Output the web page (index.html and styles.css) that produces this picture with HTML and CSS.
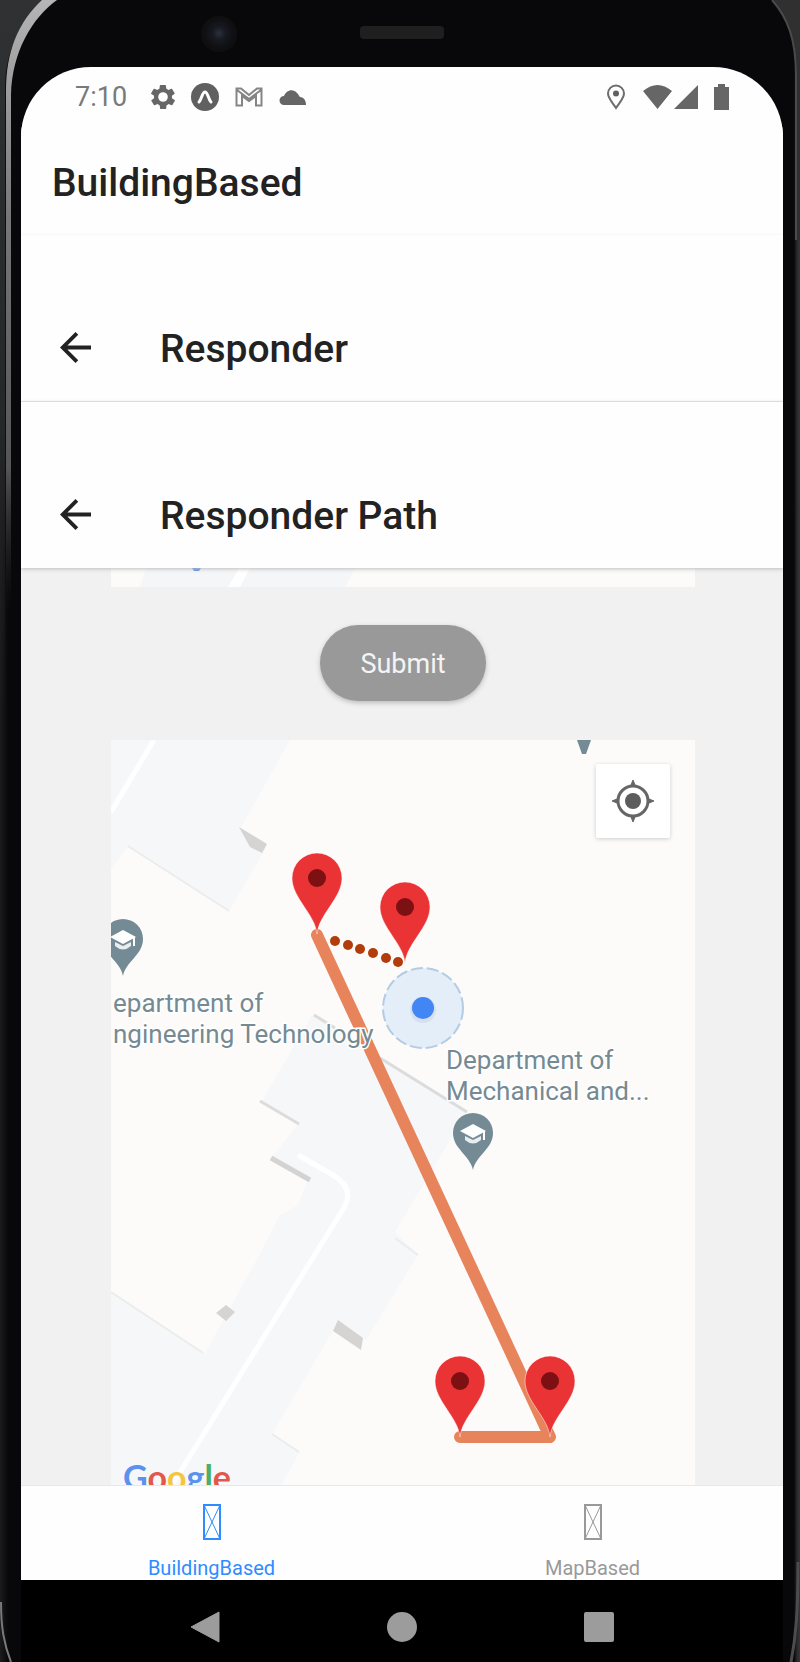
FILE: index.html
```html
<!DOCTYPE html>
<html lang="en">
<head>
<meta charset="utf-8">
<meta name="viewport" content="width=device-width, initial-scale=1">
<title>BuildingBased</title>
<link rel="stylesheet" href="styles.css">
</head>
<body>
<div class="phone">
  <svg class="edge edge-tl" viewBox="0 0 64 720" width="64" height="720" aria-hidden="true">
    <defs>
      <linearGradient id="rim" x1="0" y1="0" x2="0" y2="1"><stop offset="0" stop-color="#b5b5b5"/><stop offset=".3" stop-color="#777"/><stop offset=".65" stop-color="#555"/><stop offset=".85" stop-color="#222" stop-opacity="0"/></linearGradient>
      <linearGradient id="side" x1="0" y1="0" x2="0" y2="1"><stop offset="0" stop-color="#2f3132"/><stop offset=".6" stop-color="#262728"/><stop offset="1" stop-color="#1a1a1c" stop-opacity="0"/></linearGradient>
    </defs>
    <path d="M0 0H50C20 20 5 50 5 90V720H0Z" fill="url(#side)"/>
    <path d="M42 0H57C32 18 12 52 11 95V720H6V90C6 52 18 22 42 0Z" fill="url(#rim)"/>
  </svg>
  <svg class="edge edge-tr" viewBox="0 0 32 240" width="32" height="240" aria-hidden="true">
    <path d="M4 0H32V240H29V70C28 40 20 18 4 0Z" fill="#303030"/>
    <path d="M4 0C20 18 28 40 28 75V240" fill="none" stroke="#4a4a4c" stroke-width="2"/>
  </svg>
  <svg class="edge edge-bl" viewBox="0 0 16 60" width="16" height="60" aria-hidden="true"><path d="M1 0C1 26 4 42 11 60" fill="none" stroke="#77787a" stroke-width="2"/></svg>
  <svg class="edge edge-br" viewBox="0 0 16 100" width="16" height="100" aria-hidden="true"><path d="M14 0C14 50 12 74 7 100" fill="none" stroke="#4c4c4e" stroke-width="3"/></svg>

  <div class="bezel">
    <span class="camera"></span>
    <span class="speaker"></span>
  </div>

  <div class="screen">
    <div class="status">
      <time class="clock">7:10</time>
      <svg width="24" height="26" viewBox="2 2 20 20"><path fill="#666" fill-rule="evenodd" d="M19.4 13a7 7 0 0 0 0-2l2.1-1.6a.5.5 0 0 0 .1-.7l-2-3.4a.5.5 0 0 0-.6-.2l-2.5 1a7 7 0 0 0-1.7-1l-.4-2.6a.5.5 0 0 0-.5-.5h-4a.5.5 0 0 0-.5.5L9 5.100a7 7 0 0 0-1.700 1l-2.500-1a.5.5 0 0 0-.6.2l-2 3.400a.5.5 0 0 0 .1.700L4.600 11a7 7 0 0 0 0 2l-2.100 1.600a.5.5 0 0 0-.1.700l2 3.400c.1.2.4.3.6.2l2.500-1a7 7 0 0 0 1.700 1l.4 2.600c0 .3.2.5.5.5h4c.3 0 .5-.2.5-.5l.4-2.600a7 7 0 0 0 1.700-1l2.500 1c.2.1.5 0 .6-.2l2-3.400a.5.5 0 0 0-.1-.7zM12 16a4 4 0 1 1 0-8 4 4 0 0 1 0 8Z"/></svg>
      <svg width="28" height="28" viewBox="0 0 28 28"><circle cx="14" cy="14" r="14" fill="#606060"/><path d="M8 19C11 16 11 9 14 9S17 16 20 19" fill="none" stroke="#fff" stroke-width="3" stroke-linecap="round"/></svg>
      <svg width="28" height="20" viewBox="0 0 28 20"><path d="M1.500 1.500H6L14 8 22 1.500H26.500V18.500H21V9L14 14 7 9V18.500H1.500ZM2 3 14 12 26 3" fill="none" stroke="#858585" stroke-width="2"/></svg>
      <svg width="28" height="17" viewBox="0 0 28 17"><path d="M5 16A4.500 4.500 0 0 1 5 7C7 1 14-1 18 4 20 6 20 7 21 8 25 8 27 12 27 16Z" fill="#666"/></svg>
      <span class="spacer"></span>
      <svg width="20" height="26" viewBox="0 0 20 26"><path d="M10 1.500A8 8 0 0 0 2 9.500C2 14 6 18 10 24 14 18 18 14 18 9.500A8 8 0 0 0 10 1.500Z" fill="none" stroke="#6d6d6d" stroke-width="2"/><circle cx="10" cy="9.500" r="3" fill="#606060"/></svg>
      <svg width="56" height="24" viewBox="0 0 56 24"><path d="M1 6Q15.500-6 30 6L15.500 24ZM56 0V24H32Z" fill="#666"/></svg>
      <svg width="15" height="26" viewBox="0 0 15 26"><path d="M0 3H4V0H11V3H15V26H0Z" fill="#666"/></svg>
    </div>

    <header class="bar bar-root"><h1 class="title">BuildingBased</h1></header>
    <header class="bar bar-nested">
      <button class="back" aria-label="Back"><svg width="31" height="31" viewBox="4 4 16 16"><path fill="#222" d="M20 11H7.830l5.590-5.590L12 4l-8 8 8 8 1.410-1.410L7.830 13H20z"/></svg></button>
      <h2 class="title">Responder</h2>
    </header>
    <header class="bar bar-nested bar-last">
      <button class="back" aria-label="Back"><svg width="31" height="31" viewBox="4 4 16 16"><path fill="#222" d="M20 11H7.830l5.590-5.590L12 4l-8 8 8 8 1.410-1.410L7.830 13H20z"/></svg></button>
      <h2 class="title">Responder Path</h2>
    </header>

    <main class="content">
      <svg class="map-end" viewBox="111 568 584 19" aria-hidden="true">
        <path fill="#fcfbf9" d="M111 568H695V587H111Z"/>
        <path fill="#f4f6f8" d="M146 568H355L345 587H140Z"/>
        <path fill="#fff" d="M239 568H250L240 587H228Z"/>
        <path fill="#5b8de8" d="M192 568H201L199 571H194Z"/>
      </svg>
      <button class="submit">Submit</button>
      <div class="map">
        <svg class="canvas" viewBox="111 740 584 745" role="img" aria-label="Map with responder path">
          <defs>
            <g id="pin"><path d="M0 56C-2 36-25 20-25 0A25 25 0 0 1 25 0C25 20 2 36 0 56Z" fill="#ea3335" stroke="#fff" stroke-opacity=".5" stroke-width="1"/><circle r="9" fill="#7d1012"/></g>
            <g id="school"><path d="M0 37C-3 22-20 16-20 0A20 20 0 0 1 20 0C20 16 3 22 0 37Z" fill="#748b96"/><path d="M-13-2 0-9 13-2 0 5Z" fill="#fff"/><path d="M-8 3V7Q0 14 8 7V3L0 7Z" fill="#e8edef"/><path d="M11-2V7" stroke="#fff" stroke-width="2"/></g>
          </defs>
          <path fill="#fcfbf9" d="M111 740H695V1485H111Z"/>
          <g fill="#f5f7f9">
            <path d="M111 740H290L240 829 266 848 229 911 128 846 111 870Z"/>
            <path d="M312 1015 467 1112 395 1232 418 1255 366 1340 338 1322 272 1434 299 1452 282 1485H111V1292L205 1353 262 1250 280 1215 298 1205 307 1181 272 1157 299 1123 262 1101Z"/>
          </g>
          <g fill="none" stroke="#ebecec" stroke-width="2"><path d="M128 846 229 911M111 1292 203 1353M395 1238 418 1255M272 1434 299 1452"/></g>
          <g fill="none" stroke="#dcdcdc" stroke-width="3"><path d="M314 1015 335 1028M380 1058 467 1112M260 1101 299 1124"/></g>
          <path d="M271 1158 310 1180" stroke="#d3d3d3" stroke-width="5"/>
          <path fill="#d5d4d2" d="M239 827 267 844 262 853 250 847ZM216 1313 226 1305 235 1312 226 1321ZM338 1320 363 1338 361 1350 333 1331Z"/>
          <path d="M154 740 111 812M298 1155 333 1175Q354 1188 345 1206L172 1485" fill="none" stroke="#fff" stroke-width="5"/>
          <path d="M577 740H591L586 754H582Z" fill="#748b96"/>
          <use href="#school" x="123" y="939"/>
          <use href="#school" x="473" y="1133"/>
          <path d="M317 935 550 1437H460" fill="none" stroke="#e8845c" stroke-width="12" stroke-linejoin="round" stroke-linecap="round"/>
          <g fill="#b23c0b"><circle cx="335" cy="941" r="5"/><circle cx="348" cy="945" r="5"/><circle cx="360" cy="949" r="5"/><circle cx="373" cy="953" r="5"/><circle cx="386" cy="958" r="5"/><circle cx="398" cy="962" r="5"/></g>
          <circle cx="423" cy="1008" r="40" fill="#e4eef8" stroke="#b3cbe3" stroke-width="2" stroke-dasharray="12 4"/>
          <circle cx="423" cy="1010" r="13" fill="#d5e0ec"/>
          <circle cx="423" cy="1008" r="11" fill="#4285f4"/>
          <use href="#pin" x="317" y="878"/>
          <use href="#pin" x="405" y="907"/>
          <use href="#pin" x="460" y="1381"/>
          <use href="#pin" x="550" y="1381"/>
          <g class="place">
            <text x="113" y="1012">epartment of</text>
            <text x="113" y="1043">ngineering Technology</text>
            <text x="446" y="1069">Department of</text>
            <text x="446" y="1100">Mechanical and...</text>
          </g>
          <text class="brand" x="123" y="1490"><tspan fill="#5b92f0">G</tspan><tspan fill="#e4574d">o</tspan><tspan fill="#f5c63c">o</tspan><tspan fill="#5b92f0">g</tspan><tspan fill="#4dae66">l</tspan><tspan fill="#e4574d">e</tspan></text>
        </svg>
        <button class="locate" aria-label="My location"><svg width="44" height="44" viewBox="0 0 44 44"><circle cx="22" cy="22" r="15" fill="none" stroke="#666" stroke-width="3"/><circle cx="22" cy="22" r="8" fill="#5c5c5c"/><path d="M20 6 22 1 24 6ZM20 38 22 43 24 38ZM6 20 1 22 6 24ZM38 20 43 22 38 24Z" fill="#666" stroke="#666" stroke-width="1"/></svg></button>
      </div>
    </main>

    <nav class="tabs">
      <a class="tab tab-active" href="#building"><svg width="20" height="36" viewBox="0 0 20 36"><path d="M2 1H18V35H2Z" fill="none" stroke="currentColor" stroke-width="2"/><path d="M2 1 18 35M18 1 2 35" stroke="currentColor" stroke-width="1"/></svg>BuildingBased</a>
      <a class="tab" href="#map"><svg width="20" height="36" viewBox="0 0 20 36"><path d="M2 1H18V35H2Z" fill="none" stroke="currentColor" stroke-width="2"/><path d="M2 1 18 35M18 1 2 35" stroke="currentColor" stroke-width="1"/></svg>MapBased</a>
    </nav>
  </div>

  <div class="system">
    <button class="key" aria-label="Back"><svg width="30" height="32" viewBox="0 0 30 32"><path d="M29 1V31L1 16Z" fill="#9c9c9c" stroke="#9c9c9c" stroke-linejoin="round"/></svg></button>
    <button class="key" aria-label="Home"><svg width="30" height="32" viewBox="0 0 30 32"><circle cx="15" cy="16" r="15" fill="#9c9c9c"/></svg></button>
    <button class="key" aria-label="Overview"><svg width="30" height="32" viewBox="0 0 30 32"><rect y="1" width="30" height="30" rx="2" fill="#9c9c9c"/></svg></button>
  </div>
</div>
</body>
</html>
```
FILE: styles.css
```css
* { box-sizing: border-box; }

body {
  margin: 0;
  background: #08080a;
  font-family: Roboto, "Liberation Sans", sans-serif;
  color: #222;
}

button {
  padding: 0;
  border: 0;
  background: none;
  font: inherit;
}

svg { display: block; flex: none; }

.phone {
  position: relative;
  display: flex;
  flex-direction: column;
  min-height: 100vh;
  padding: 0 17px 0 21px;
  background: linear-gradient(to left, #363638, #29292b 3px, #08080a 6px, #08080a 50%, #08080a calc(100% - 8px), #1c1c1e 100%);
}

.edge { position: absolute; }
.edge-tl { top: 0; left: 0; }
.edge-tr { top: 0; right: 0; }
.edge-bl { bottom: 0; left: 0; }
.edge-br { bottom: 0; right: 0; }

.bezel {
  position: relative;
  display: flex;
  justify-content: center;
  height: 67px;
  padding-top: 26px;
}

.speaker {
  width: 84px;
  height: 13px;
  border-radius: 4px;
  background: #1f1f1f;
}

.camera {
  position: absolute;
  top: 16px;
  left: 180px;
  width: 36px;
  height: 36px;
  border-radius: 50%;
  background: radial-gradient(circle at 50% 48%, #2b303b 0, #171a21 25%, #101012 55%, #0c0c0e 100%);
}

.screen {
  overflow: hidden;
  border-radius: 70px 70px 0 0;
  background: #fefefe;
}

.status {
  display: flex;
  align-items: center;
  gap: 16px;
  height: 60px;
  padding: 0 54px;
}

.clock {
  width: 60px;
  font-size: 27px;
  line-height: 32px;
  color: #7a7a7a;
}

.spacer { flex: 1; }

.bar {
  position: relative;
  display: flex;
  background: #fefefe;
}

.bar-root { padding: 34px 31px 30px; }

.bar-nested {
  padding: 92px 39px 30px;
  border-bottom: 1px solid #e6e6e6;
  box-shadow: 0 1px 3px #d8d8d8;
}

.bar-last {
  border: 0;
  box-shadow: 0 1px 4px #bdbdbd;
}

.title {
  margin: 0;
  font-size: 39px;
  line-height: 44px;
  font-weight: 500;
}

.back {
  width: 100px;
  height: 40px;
}

.content {
  padding: 0 88px 0 90px;
  background: #f1f1f1;
}

.map-end { width: 100%; }

.submit {
  display: block;
  margin: 38px auto 39px;
  padding: 21px 40px 19px;
  border-radius: 38px;
  background: #999;
  box-shadow: 0 2px 5px #bbb;
  font-size: 27px;
  line-height: 36px;
  color: #f4f4f4;
}

.map { position: relative; }
.canvas { width: 100%; }

.place {
  font-size: 26px;
  fill: #758a92;
  stroke: #fff;
  stroke-width: 3px;
  paint-order: stroke;
}

.brand {
  font-family: Lato, sans-serif;
  font-size: 34px;
  font-weight: 700;
}

.locate {
  position: absolute;
  top: 24px;
  right: 25px;
  display: grid;
  place-items: center;
  width: 74px;
  height: 74px;
  border-radius: 2px;
  background: #fff;
  box-shadow: 0 1px 4px #ccc;
}

.tabs {
  position: relative;
  display: flex;
  border-top: 1px solid #e6e8ea;
  background: #fefefe;
}

.tab {
  display: flex;
  flex: 1;
  flex-direction: column;
  align-items: center;
  gap: 16px;
  padding-top: 18px;
  font-size: 20px;
  line-height: 24px;
  color: #999;
  text-decoration: none;
}

.tab-active { color: #2f8cff; }

.system {
  display: flex;
  flex: 1;
  align-items: center;
  justify-content: center;
  gap: 167px;
  min-height: 80px;
  padding-top: 12px;
  background: #000;
}
```
